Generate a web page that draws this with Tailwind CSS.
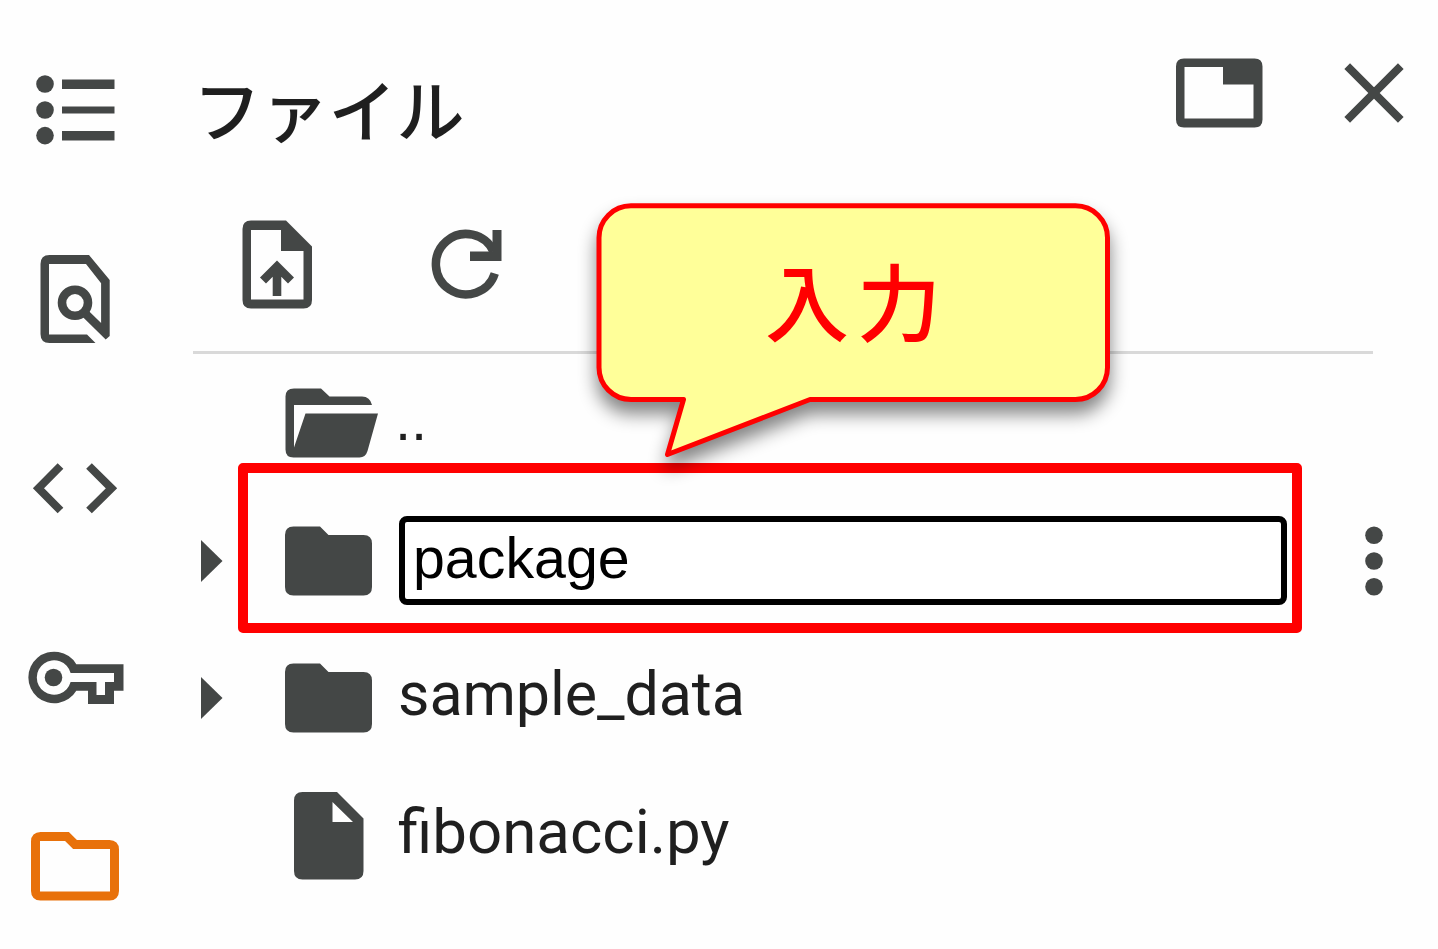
<!DOCTYPE html>
<html lang="ja">
<head>
<meta charset="utf-8">
<title>ファイル</title>
<script src="https://cdn.jsdelivr.net/npm/@tailwindcss/browser@4"></script>
</head>
<body class="bg-white">
<div class="relative flex h-[949px] w-[1438px] overflow-hidden bg-[#fefefe] text-[#444746]">

  <!-- Side rail -->
  <nav class="flex w-[150px] shrink-0 flex-col items-center gap-[85px] pt-[58px]">
    <svg class="size-[104px] shrink-0" viewBox="23 58 104 104" fill="currentColor"><circle cx="45" cy="84" r="8.8"/><circle cx="45" cy="110" r="8.8"/><circle cx="45" cy="135.600" r="8.800"/><path d="M62 79.500h52.500v9.500H62zM62 106.500h52.500v7H62zM62 131h52.500v9.500H62z"/></svg>
    <svg class="size-[104px] shrink-0" viewBox="23 247 104 104" fill="none" stroke="currentColor" stroke-width="8.600"><path d="M95.500 343H49.500q-9 0-9-9v-70q0-9 9-9H89l20.700 25v56l-4 3.500L81.500 315.700l6-6L101.100 323V283.200L86 264H49v70.500h38z" fill="currentColor" stroke="none"/><circle cx="75" cy="302.800" r="13"/></svg>
    <svg class="size-[104px] shrink-0" viewBox="23 436 104 104" fill="none" stroke="currentColor" stroke-width="8"><path d="M60.500 466 38.500 488.300 60.500 510.500M89 466l22.500 22.300L89 510.500"/></svg>
    <svg class="size-[104px] shrink-0" viewBox="23 625 104 104" fill="currentColor"><circle cx="53.500" cy="677.500" r="8.800"/><path fill-rule="evenodd" d="M123.500 664.200v26.500H114v13.300H88v-13.300H76.300A25.800 25.800 0 1 1 76.300 664.200zM114 673H70.600a17.200 17.200 0 1 0 0 9H96.500v13h8.500v-13h9z"/></svg>
    <svg class="size-[104px] shrink-0 text-[#e8710a]" viewBox="23 814 104 104" fill="none" stroke="currentColor" stroke-width="9"><path d="M40.500 836.500H67l8 8h34.500q5 0 5 5V891q0 5-5 5h-69q-5 0-5-5v-49.500q0-5 5-5z"/></svg>
  </nav>

  <main class="flex flex-1 flex-col pl-[43px]">
    <header class="flex h-[213px] items-start pr-[12px] pt-[41px]">
      <h1 class="mt-[17px] flex-1 whitespace-nowrap font-['Noto_Sans_CJK_JP'] text-[68px] font-medium leading-[100px] tracking-[-0.200px] text-[#1f1f1f]">ファイル</h1>
      <svg class="mr-[51px] size-[104px]" viewBox="1167 41 104 104" fill="currentColor"><path fill-rule="evenodd" d="M1184 58.500h70.500q8 0 8 8v53q0 8-8 8H1184q-8 0-8-8v-53q0-8 8-8zM1184.500 67v51.500H1253.500V84.500H1223V67z"/></svg>
      <svg class="size-[104px]" viewBox="1322 41 104 104" fill="none" stroke="currentColor" stroke-width="8"><path d="m1347.200 66.200 53.600 53.600m0-53.600-53.600 53.600"/></svg>
    </header>

    <div class="flex h-[138px] items-start gap-[85px] pl-[32px]">
      <svg class="size-[104px]" viewBox="225 213 104 104" fill="currentColor"><path fill-rule="evenodd" d="M251 220.500h35l26 26v53.500q0 8.500-8.500 8.500H251q-8.500 0-8.500-8.500v-71q0-8.500 8.500-8.500zM251 230v69.500h52.500V251H281V230z"/><path d="M277 260.500l17 17-6 6-6.700-6.700V296h-8.600V276.800l-6.700 6.700-6-6z"/></svg>
      <svg class="size-[104px]" viewBox="414 213 104 104"><path d="M493.500 251.500A30.200 30.200 0 1 0 494.800 273.500" fill="none" stroke="currentColor" stroke-width="8.500"/><path d="M492.500 230h9v31H470v-9.500h22.500z" fill="currentColor"/></svg>
    </div>
    <div class="h-[3px] w-[1180px] shrink-0 bg-[#d9d9d9]"></div>

    <!-- File tree -->
    <ul class="font-[Roboto] text-[61px] leading-[80px] text-[#1f1f1f]">
      <li class="flex h-[138px] items-center pl-[84px]">
        <svg class="size-[104px] text-[#444746]" viewBox="277 371 104 104" fill="currentColor"><path d="M294 388.500h27l8.500 8H362q8 0 10 8.500H294v42.500L305.500 413.500H378L367.500 451q-2 6.500-8 6.500H293.500q-8 0-8-8v-53q0-8 8.500-8z"/></svg>
        <span class="ml-[14px] mt-[-6px] font-['Liberation_Sans'] text-[58px]">..</span>
      </li>
      <li class="flex h-[137px] items-center">
        <svg class="h-[104px] w-[84px]" viewBox="193 508.500 84 104" fill="#444746"><path d="M201 539.500v42l21.500-21z"/></svg>
        <svg class="size-[104px]" viewBox="277 508.500 104 104" fill="#444746"><path d="M293.500 526H320l8.500 8.500h35q8.500 0 8.500 8.500v43.500q0 8.500-8.500 8.500h-70q-8.500 0-8.500-8.500v-52q0-8.500 8.500-8.500z"/></svg>
        <div class="ml-[18px] h-[89px] w-[888px] rounded-[8px] border-6 border-black bg-white pl-[8px] font-['Liberation_Sans'] text-[57.300px] leading-[72px] text-black">package</div>
        <svg class="ml-[35px] size-[104px]" viewBox="1322 508.500 104 104" fill="#444746"><circle cx="1374" cy="534.800" r="8.800"/><circle cx="1374" cy="560.500" r="8.800"/><circle cx="1374" cy="586.200" r="8.800"/></svg>
      </li>
      <li class="flex h-[138px] items-center">
        <svg class="h-[104px] w-[84px]" viewBox="193 508.500 84 104" fill="#444746"><path d="M201 539.500v42l21.500-21z"/></svg>
        <svg class="size-[104px]" viewBox="277 508.500 104 104" fill="#444746"><path d="M293.500 526H320l8.500 8.500h35q8.500 0 8.500 8.500v43.500q0 8.500-8.500 8.500h-70q-8.500 0-8.500-8.500v-52q0-8.500 8.500-8.500z"/></svg>
        <span class="ml-[17px] mt-[-8px] tracking-[-0.100px]">sample_data</span>
      </li>
      <li class="flex h-[138px] items-center pl-[84px]">
        <svg class="size-[104px]" viewBox="277 784 104 104" fill="#444746"><path fill-rule="evenodd" d="M302.500 792H337l26.500 26.500V871q0 8.500-8.500 8.500H302.500q-8.500 0-8.500-8.500v-70.500q0-8.500 8.500-8.500zM332.500 802v20H353z"/></svg>
        <span class="ml-[17px] mt-[-8px] text-[61.800px]">fibonacci.py</span>
      </li>
    </ul>
  </main>

  <!-- Highlight frame and callout lie over the panel -->
  <div class="absolute left-[238px] top-[463px] h-[170px] w-[1064px] rounded-[5px] border-10 border-[#ff0000]"></div>
  <div class="absolute left-[570px] top-[180px] h-[310px] w-[570px]">
    <svg class="absolute inset-0 size-full overflow-visible drop-shadow-[0_12px_9px_rgba(0,0,0,0.48)]" viewBox="570 180 570 310"><path d="M631 205.800H1075.500a32 32 0 0 1 32 32V367.500a32 32 0 0 1-32 32H810L667.500 454.500 683.500 399.500H631a32 32 0 0 1-32-32V237.800a32 32 0 0 1 32-32z" fill="#ffff99" stroke="#ff0000" stroke-width="5" stroke-linejoin="round"/></svg>
    <div class="relative pl-[195px] pt-[59px] font-['Noto_Sans_CJK_JP'] text-[84px] font-medium leading-[120px] tracking-[8px] text-[#ff0000]">入力</div>
  </div>
</div>
</body>
</html>
